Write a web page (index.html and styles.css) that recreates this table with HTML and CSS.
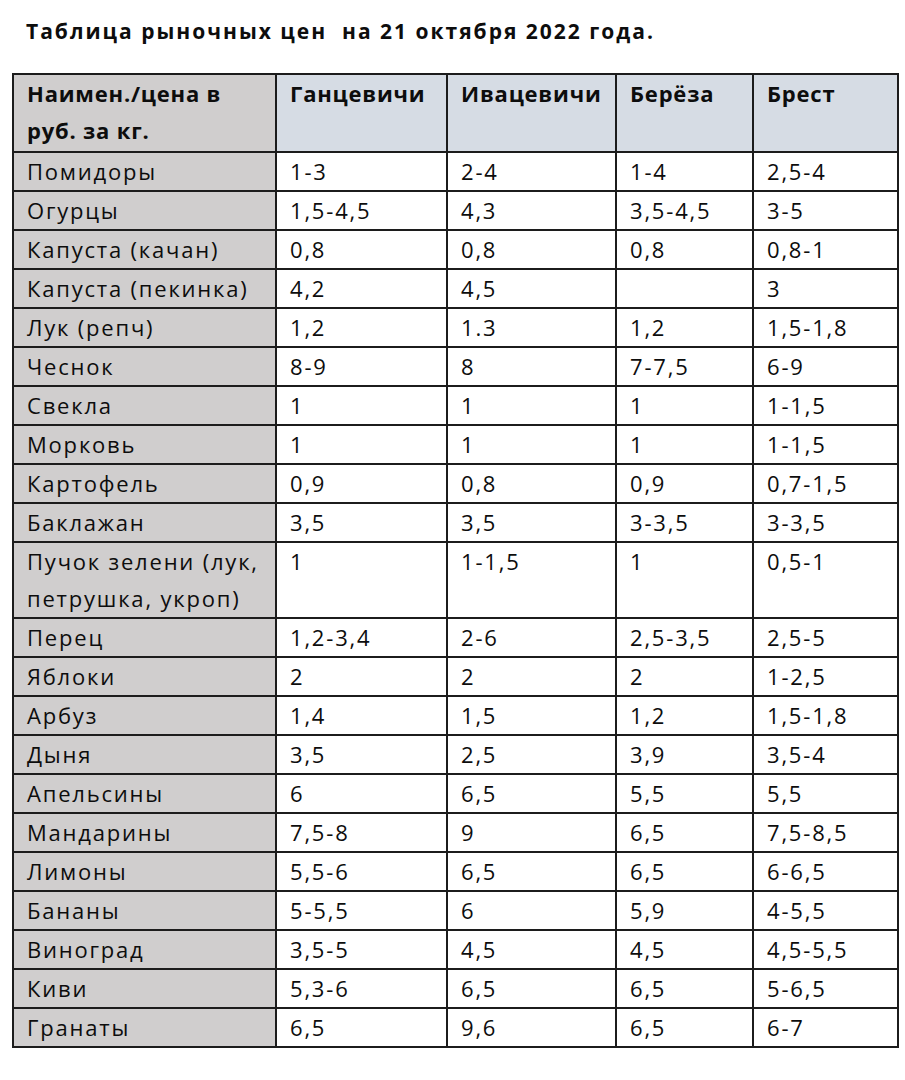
FILE: index.html
```html
<!DOCTYPE html>
<html lang="ru">
<head>
<meta charset="utf-8">
<link rel="stylesheet" href="styles.css">
</head>
<body>
<div class="page">
  <h1 class="title">Таблица рыночных цен&nbsp; на 21 октября 2022 года.</h1>
  <table class="prices">
    <colgroup>
      <col class="c1"><col class="c2"><col class="c3"><col class="c4"><col class="c5">
    </colgroup>
    <thead>
      <tr>
        <th class="name">Наимен./цена в руб. за кг.</th>
        <th>Ганцевичи</th>
        <th>Ивацевичи</th>
        <th>Берёза</th>
        <th>Брест</th>
      </tr>
    </thead>
    <tbody>
      <tr><td class="name">Помидоры</td><td>1-3</td><td>2-4</td><td>1-4</td><td>2,5-4</td></tr>
      <tr><td class="name">Огурцы</td><td>1,5-4,5</td><td>4,3</td><td>3,5-4,5</td><td>3-5</td></tr>
      <tr><td class="name">Капуста (качан)</td><td>0,8</td><td>0,8</td><td>0,8</td><td>0,8-1</td></tr>
      <tr><td class="name">Капуста (пекинка)</td><td>4,2</td><td>4,5</td><td></td><td>3</td></tr>
      <tr><td class="name">Лук (репч)</td><td>1,2</td><td>1.3</td><td>1,2</td><td>1,5-1,8</td></tr>
      <tr><td class="name">Чеснок</td><td>8-9</td><td>8</td><td>7-7,5</td><td>6-9</td></tr>
      <tr><td class="name">Свекла</td><td>1</td><td>1</td><td>1</td><td>1-1,5</td></tr>
      <tr><td class="name">Морковь</td><td>1</td><td>1</td><td>1</td><td>1-1,5</td></tr>
      <tr><td class="name">Картофель</td><td>0,9</td><td>0,8</td><td>0,9</td><td>0,7-1,5</td></tr>
      <tr><td class="name">Баклажан</td><td>3,5</td><td>3,5</td><td>3-3,5</td><td>3-3,5</td></tr>
      <tr><td class="name">Пучок зелени (лук, петрушка, укроп)</td><td>1</td><td>1-1,5</td><td>1</td><td>0,5-1</td></tr>
      <tr><td class="name">Перец</td><td>1,2-3,4</td><td>2-6</td><td>2,5-3,5</td><td>2,5-5</td></tr>
      <tr><td class="name">Яблоки</td><td>2</td><td>2</td><td>2</td><td>1-2,5</td></tr>
      <tr><td class="name">Арбуз</td><td>1,4</td><td>1,5</td><td>1,2</td><td>1,5-1,8</td></tr>
      <tr><td class="name">Дыня</td><td>3,5</td><td>2,5</td><td>3,9</td><td>3,5-4</td></tr>
      <tr><td class="name">Апельсины</td><td>6</td><td>6,5</td><td>5,5</td><td>5,5</td></tr>
      <tr><td class="name">Мандарины</td><td>7,5-8</td><td>9</td><td>6,5</td><td>7,5-8,5</td></tr>
      <tr><td class="name">Лимоны</td><td>5,5-6</td><td>6,5</td><td>6,5</td><td>6-6,5</td></tr>
      <tr><td class="name">Бананы</td><td>5-5,5</td><td>6</td><td>5,9</td><td>4-5,5</td></tr>
      <tr><td class="name">Виноград</td><td>3,5-5</td><td>4,5</td><td>4,5</td><td>4,5-5,5</td></tr>
      <tr><td class="name">Киви</td><td>5,3-6</td><td>6,5</td><td>6,5</td><td>5-6,5</td></tr>
      <tr><td class="name">Гранаты</td><td>6,5</td><td>9,6</td><td>6,5</td><td>6-7</td></tr>
    </tbody>
  </table>
</div>
</body>
</html>
```

FILE: styles.css
```css
html, body {
  margin: 0;
  padding: 0;
  background: #ffffff;
}

.page {
  padding: 15px 8px 0 12px;
  font-family: "Open Sans", "Noto Sans", sans-serif;
  color: #0d0d0d;
}

.title {
  margin: 0 0 26px 14px;
  font-size: 21px;
  font-weight: 700;
  line-height: 32px;
  letter-spacing: 2px;
  white-space: nowrap;
}

.prices {
  border-collapse: collapse;
  table-layout: fixed;
  width: 885px;
  font-size: 22px;
  line-height: 37px;
  letter-spacing: 1.8px;
}

.c1 { width: 263px; }
.c2 { width: 171px; }
.c3 { width: 169px; }
.c4 { width: 137px; }
.c5 { width: 145px; }

.prices th,
.prices td {
  border: 2px solid #1c1c1c;
  padding: 0 4px 0 13px;
  text-align: left;
  vertical-align: top;
  background: #ffffff;
}

.prices th {
  font-weight: 700;
  letter-spacing: 0.8px;
  background: #d6dce4;
  height: 76px;
}

.prices .name {
  background: #d0cece;
}

.prices td.name {
  font-weight: 400;
}
```
